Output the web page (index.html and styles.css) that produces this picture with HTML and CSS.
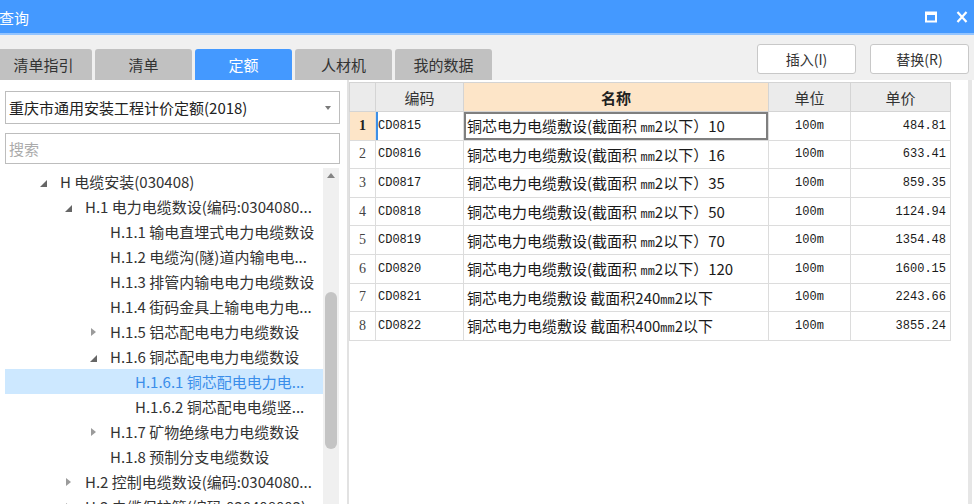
FILE: index.html
```html
<!DOCTYPE html>
<html lang="zh">
<head>
<meta charset="utf-8">
<title>查询</title>
<link rel="stylesheet" href="styles.css">
</head>
<body>
<div class="window">
  <div class="titlebar">
    <span class="title">查询</span>
    <div class="winbtns">
      <svg class="wicon" width="12" height="12" viewBox="0 0 12 12"><rect x="1" y="1.5" width="10" height="9" fill="none" stroke="#fff" stroke-width="2"/><rect x="1" y="1" width="10" height="3" fill="#fff"/></svg>
      <svg class="wicon" width="12" height="12" viewBox="0 0 12 12"><path d="M1.5 1 L10.5 11 M10.5 1 L1.5 11" stroke="#fff" stroke-width="2.2" fill="none"/></svg>
    </div>
  </div>

  <div class="toolbar">
    <div class="tabs">
      <div class="tab">清单指引</div>
      <div class="tab">清单</div>
      <div class="tab active">定额</div>
      <div class="tab">人材机</div>
      <div class="tab">我的数据</div>
    </div>
    <div class="actions">
      <button class="btn">插入(I)</button>
      <button class="btn">替换(R)</button>
    </div>
  </div>

  <div class="main">
    <div class="left">
      <div class="select"><span>重庆市通用安装工程计价定额(2018)</span><span class="caret"></span></div>
      <div class="search">搜索</div>
      <div class="treewrap">
        <ul class="tree">
          <li class="row l1"><span class="tg"><span class="exp"></span></span><span class="tx">H 电缆安装(030408)</span></li>
          <li class="row l2"><span class="tg"><span class="exp"></span></span><span class="tx">H.1 电力电缆数设(编码:0304080...</span></li>
          <li class="row l3"><span class="tg"></span><span class="tx">H.1.1 输电直埋式电力电缆数设</span></li>
          <li class="row l3"><span class="tg"></span><span class="tx">H.1.2 电缆沟(隧)道内输电电...</span></li>
          <li class="row l3"><span class="tg"></span><span class="tx">H.1.3 排管内输电电力电缆数设</span></li>
          <li class="row l3"><span class="tg"></span><span class="tx">H.1.4 街码金具上输电电力电...</span></li>
          <li class="row l3"><span class="tg"><span class="col"></span></span><span class="tx">H.1.5 铝芯配电电力电缆数设</span></li>
          <li class="row l3"><span class="tg"><span class="exp"></span></span><span class="tx">H.1.6 铜芯配电电力电缆数设</span></li>
          <li class="row l4 sel"><span class="tg"></span><span class="tx">H.1.6.1 铜芯配电电力电...</span></li>
          <li class="row l4"><span class="tg"></span><span class="tx">H.1.6.2 铜芯配电电缆竖...</span></li>
          <li class="row l3"><span class="tg"><span class="col"></span></span><span class="tx">H.1.7 矿物绝缘电力电缆数设</span></li>
          <li class="row l3"><span class="tg"></span><span class="tx">H.1.8 预制分支电缆数设</span></li>
          <li class="row l2"><span class="tg"><span class="col"></span></span><span class="tx">H.2 控制电缆数设(编码:0304080...</span></li>
          <li class="row l2"><span class="tg"><span class="col"></span></span><span class="tx">H.3 电缆保护管(编码:030408003)</span></li>
        </ul>
        <div class="vscroll"><span class="up"></span><span class="thumb"></span></div>
      </div>
    </div>

    <div class="right">
      <div class="gridarea">
        <table class="grid">
          <colgroup><col class="c-no"><col class="c-code"><col class="c-name"><col class="c-unit"><col class="c-price"></colgroup>
          <thead>
            <tr><th></th><th>编码</th><th class="hl">名称</th><th>单位</th><th>单价</th></tr>
          </thead>
          <tbody>
            <tr><td class="no cur">1</td><td class="code focus">CD0815</td><td class="name selcell">铜芯电力电缆敷设(截面积 <span class="mm">mm</span>2以下）10</td><td class="unit">100m</td><td class="price">484.81</td></tr>
            <tr><td class="no">2</td><td class="code">CD0816</td><td class="name">铜芯电力电缆敷设(截面积 <span class="mm">mm</span>2以下）16</td><td class="unit">100m</td><td class="price">633.41</td></tr>
            <tr><td class="no">3</td><td class="code">CD0817</td><td class="name">铜芯电力电缆敷设(截面积 <span class="mm">mm</span>2以下）35</td><td class="unit">100m</td><td class="price">859.35</td></tr>
            <tr><td class="no">4</td><td class="code">CD0818</td><td class="name">铜芯电力电缆敷设(截面积 <span class="mm">mm</span>2以下）50</td><td class="unit">100m</td><td class="price">1124.94</td></tr>
            <tr><td class="no">5</td><td class="code">CD0819</td><td class="name">铜芯电力电缆敷设(截面积 <span class="mm">mm</span>2以下）70</td><td class="unit">100m</td><td class="price">1354.48</td></tr>
            <tr><td class="no">6</td><td class="code">CD0820</td><td class="name">铜芯电力电缆敷设(截面积 <span class="mm">mm</span>2以下）120</td><td class="unit">100m</td><td class="price">1600.15</td></tr>
            <tr><td class="no">7</td><td class="code">CD0821</td><td class="name">铜芯电力电缆敷设 截面积240<span class="mm">mm</span>2以下</td><td class="unit">100m</td><td class="price">2243.66</td></tr>
            <tr><td class="no">8</td><td class="code">CD0822</td><td class="name">铜芯电力电缆敷设 截面积400<span class="mm">mm</span>2以下</td><td class="unit">100m</td><td class="price">3855.24</td></tr>
          </tbody>
        </table>
      </div>
      <div class="vline"></div>
    </div>
  </div>
</div>
</body>
</html>
```

FILE: styles.css
```css
html, body {
  margin: 0;
  padding: 0;
}
body {
  background: #f0f0f0;
  font-family: "Noto Sans CJK SC", "Microsoft YaHei", sans-serif;
  width: 974px;
  height: 504px;
  overflow: hidden;
}
.window {
  width: 974px;
  height: 504px;
  display: flex;
  flex-direction: column;
}

/* title bar */
.titlebar {
  height: 33px;
  flex: none;
  background: #4499ff;
  border-bottom: 2px solid #93c4ff;
  display: flex;
  align-items: center;
  justify-content: space-between;
  color: #fff;
}
.title {
  font-size: 15px;
  line-height: 1;
  margin-left: -1px;
  margin-top: 1px;
}
.winbtns {
  display: flex;
  align-items: center;
  gap: 19px;
  margin-right: 6px;
}
.wicon { display: block; }

/* toolbar with tabs */
.toolbar {
  height: 45px;
  flex: none;
  display: flex;
  justify-content: space-between;
}
.tabs {
  display: flex;
  gap: 3px;
  align-self: flex-end;
  margin-left: -5px;
}
.tab {
  width: 97px;
  height: 31px;
  background: #c1c1c1;
  border-radius: 3px 3px 0 0;
  font-size: 15px;
  color: #333;
  display: flex;
  align-items: center;
  justify-content: center;
}
.tab.active {
  background: #4499ff;
  color: #fff;
}
.actions {
  display: flex;
  align-items: flex-start;
  gap: 14px;
  margin: 9px 5px 0 0;
}
.btn {
  width: 99px;
  height: 30px;
  box-sizing: border-box;
  border: 1px solid #c8c8c8;
  border-radius: 3px;
  background: #fff;
  font-family: "Noto Sans CJK SC", sans-serif;
  font-size: 14px;
  color: #333;
  padding: 0;
}

/* main */
.main {
  flex: 1;
  display: flex;
  min-height: 0;
}
.left {
  width: 347px;
  flex: none;
  background: #fff;
  display: flex;
  flex-direction: column;
}
.select {
  margin: 11px 7px 0 5px;
  height: 33px;
  box-sizing: border-box;
  border: 1px solid #bdbdbd;
  display: flex;
  align-items: center;
  justify-content: space-between;
  padding-left: 3px;
  font-size: 15px;
  color: #222;
}
.caret {
  width: 0;
  height: 0;
  border-left: 3.5px solid transparent;
  border-right: 3.5px solid transparent;
  border-top: 4px solid #7a7a7a;
  margin-right: 8px;
}
.search {
  margin: 9px 7px 0 5px;
  height: 31px;
  box-sizing: border-box;
  border: 1px solid #bdbdbd;
  padding-left: 3px;
  display: flex;
  align-items: center;
  font-size: 15px;
  color: #ababab;
}
.treewrap {
  flex: 1;
  min-height: 0;
  display: flex;
  margin-top: 4px;
  padding-left: 5px;
  overflow: hidden;
}
.tree {
  list-style: none;
  margin: 0;
  padding: 1px 0 0 0;
  width: 318px;
  flex: none;
}
.row {
  height: 25px;
  display: flex;
  align-items: center;
  font-size: 15px;
  color: #333;
  white-space: nowrap;
  padding-right: 6px;
}
.row.l1 { padding-left: 31px; }
.row.l2 { padding-left: 56px; }
.row.l3 { padding-left: 81px; }
.row.l4 { padding-left: 106px; }
.row.sel {
  background: #cde8ff;
  color: #3b8eea;
}
.tg {
  width: 14px;
  height: 25px;
  margin-right: 10px;
  flex: none;
  display: flex;
  align-items: center;
  justify-content: center;
}
.tx {
  overflow: hidden;
  text-overflow: ellipsis;
}
.exp {
  width: 0;
  height: 0;
  border-left: 7px solid transparent;
  border-bottom: 7px solid #666;
  margin-top: 3px;
}
.col {
  width: 0;
  height: 0;
  border-top: 4.5px solid transparent;
  border-bottom: 4.5px solid transparent;
  border-left: 5px solid #9b9b9b;
  margin-top: 1px;
}
.vscroll {
  width: 16px;
  flex: none;
  background: #f0f0f0;
  display: flex;
  flex-direction: column;
  align-items: center;
}
.up {
  width: 0;
  height: 0;
  border-left: 4.5px solid transparent;
  border-right: 4.5px solid transparent;
  border-bottom: 5px solid #858585;
  margin-top: 5px;
}
.thumb {
  width: 12px;
  height: 157px;
  background: #c4c4c4;
  border-radius: 6px;
  margin-top: 114px;
}

/* right grid */
.right {
  flex: 1;
  display: flex;
  background: #fff;
  border-left: 2px solid #e2e2e2;
}
.gridarea {
  width: 619px;
  flex: none;
  padding-top: 2px;
}
.vline {
  width: 4px;
  background: #e6e6e6;
}
.grid {
  border-collapse: collapse;
  table-layout: fixed;
  width: 601px;
}
.c-no { width: 26px; }
.c-code { width: 88px; }
.c-name { width: 305px; }
.c-unit { width: 82px; }
.c-price { width: 100px; }
.grid th {
  height: 28px;
  padding: 0;
  background: #ebebeb;
  border: 1px solid #d4d4d4;
  font-weight: normal;
  font-size: 15px;
  color: #333;
}
.grid th.hl {
  background: #fde5c8;
  font-weight: bold;
  color: #222;
}
.grid tbody tr { height: 28.6px; }
.grid td {
  padding: 0;
  border: 1px solid #dcdcdc;
  white-space: nowrap;
  overflow: hidden;
  color: #1a1a1a;
}
.grid td.no {
  background: #fff;
  text-align: center;
  font-family: "Liberation Serif", serif;
  font-size: 14px;
  color: #444;
}
.grid td.no.cur {
  background: #fde5c8;
  font-weight: bold;
  color: #222;
}
.grid td.code {
  font-family: "Liberation Mono", monospace;
  font-size: 12px;
  padding-left: 2px;
}
.grid td.code.focus {
  box-shadow: inset 2px 0 0 #3d8fe6;
}
.grid td.name {
  font-family: "Noto Sans CJK SC", sans-serif;
  font-size: 15px;
  padding-left: 3px;
}
.grid td.name.selcell {
  box-shadow: inset 0 0 0 2px #7f7f7f;
}
.mm {
  font-family: "Liberation Mono", monospace;
  font-size: 12px;
}
.grid td.unit {
  text-align: center;
  font-family: "Liberation Mono", monospace;
  font-size: 12px;
}
.grid td.price {
  text-align: right;
  padding-right: 4px;
  font-family: "Liberation Mono", monospace;
  font-size: 12px;
}
```
